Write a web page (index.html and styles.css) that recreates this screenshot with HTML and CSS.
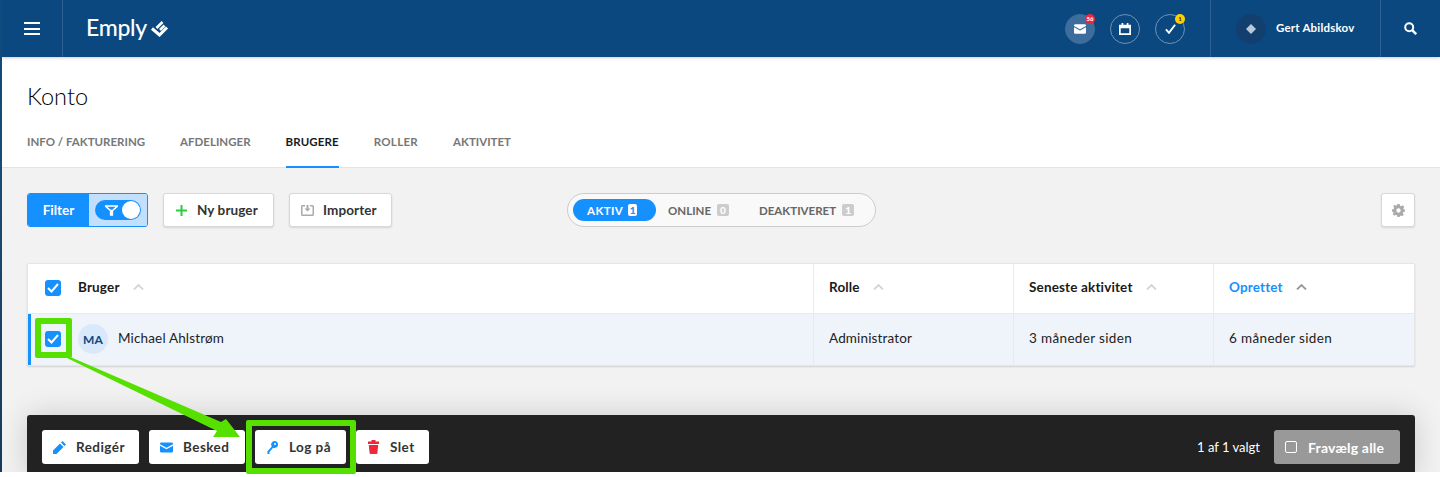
FILE: index.html
```html
<!DOCTYPE html>
<html lang="da">
<head>
<meta charset="utf-8">
<title>Konto</title>
<link rel="stylesheet" href="styles.css">
</head>
<body>
<div class="strip"></div>
<div class="app">
  <header class="topbar">
    <button class="burger" aria-label="Menu"><span></span><span></span><span></span></button>
    <div class="logo"><span class="logo-text">Emply</span><svg width="19" height="17" viewBox="0 0 19 17"><path d="M2 8.500l7.500 6.500L17 7.500" fill="none" stroke="#fff" stroke-width="3"/><path d="M6.500 8l6-6M10 10l4.500-4.500" fill="none" stroke="#fff" stroke-width="2.600"/></svg></div>
    <div class="top-actions">
      <div class="round filled">
        <svg width="12" height="10" viewBox="0 0 14 11"><path d="M1.500 0h11A1.500 1.500 0 0 1 14 1.500v.6L7 5.800 0 2.100v-.6A1.500 1.500 0 0 1 1.500 0zM0 3.600l7 3.700 7-3.700v5.900A1.500 1.500 0 0 1 12.500 11h-11A1.500 1.500 0 0 1 0 9.500z" fill="#fff"/></svg>
        <span class="badge red">56</span>
      </div>
      <div class="round">
        <svg width="12" height="12" viewBox="0 0 14 14"><path d="M3 0h2v2h4V0h2v2h3v12H0V2h3zM2 6v6h10V6z" fill="#fff" fill-rule="evenodd"/></svg>
      </div>
      <div class="round">
        <svg width="11" height="10" viewBox="0 0 14 13"><path d="M1 7l4 4.500L13 1" fill="none" stroke="#fff" stroke-width="2.400"/></svg>
        <span class="badge yellow">1</span>
      </div>
    </div>
    <div class="user">
      <div class="avatar"><svg width="10" height="10" viewBox="0 0 10 10"><path d="M5 0l5 5-5 5-5-5z" fill="#b9c7d6"/></svg></div>
      <span class="user-name">Gert Abildskov</span>
    </div>
    <div class="search">
      <svg width="13" height="13" viewBox="0 0 13 13"><circle cx="5.200" cy="5.200" r="4" fill="none" stroke="#fff" stroke-width="2"/><path d="M8.200 8.200l4 4" stroke="#fff" stroke-width="2.400"/></svg>
    </div>
  </header>

  <section class="page-head">
    <h1 class="title">Konto</h1>
    <nav class="tabs">
      <a class="tab">INFO / FAKTURERING</a>
      <a class="tab">AFDELINGER</a>
      <a class="tab active">BRUGERE</a>
      <a class="tab wide">ROLLER</a>
      <a class="tab">AKTIVITET</a>
    </nav>
  </section>

  <main class="content">
    <div class="toolbar">
      <div class="filter">
        <span class="filter-label">Filter</span>
        <span class="filter-side">
          <span class="toggle">
            <svg width="13" height="11" viewBox="0 0 16 13"><path d="M0 0h16v2L10 7v6H6V7L0 2zM3 2l4 3.500h2L13 2z" fill="#fff" fill-rule="evenodd"/></svg>
            <span class="knob"></span>
          </span>
        </span>
      </div>
      <button class="btn new"><svg width="11" height="11" viewBox="0 0 11 11"><path d="M4.500 0h2v4.500H11v2H6.500V11h-2V6.500H0v-2h4.500z" fill="#2ecc40"/></svg>Ny bruger</button>
      <button class="btn import"><svg width="13" height="11" viewBox="0 0 13 11"><path d="M1.500 0H4v1.500H1.500v8h10v-8H9V0h2.500A1.500 1.500 0 0 1 13 1.500v8a1.500 1.500 0 0 1-1.500 1.500h-10A1.500 1.500 0 0 1 0 9.500v-8A1.500 1.500 0 0 1 1.500 0zM5.500 0h2v3.500h2l-3 3-3-3h2z" fill="#aaa"/></svg>Importer</button>
      <div class="segments">
        <span class="seg on">AKTIV <b class="count">1</b></span>
        <span class="seg online">ONLINE <b class="count">0</b></span>
        <span class="seg off">DEAKTIVERET <b class="count">1</b></span>
      </div>
      <button class="btn gear" aria-label="Indstillinger">
        <svg width="13" height="13" viewBox="0 0 24 24"><path d="M10 0h4l.7 3.300 2.300 1 2.900-1.800 2.800 2.800L21 8l1 2.300L24 10v4l-3 .7-1 2.300 1.800 2.900-2.800 2.800L17 21l-2.300 1-.7 2h-4l-.7-3-2.300-1-2.900 1.800-2.800-2.800L3 17l-1-2.300L0 14v-4l3-.7 1-2.300-1.800-2.900 2.800-2.800L7 3l2.300-1zM12 8a4 4 0 1 0 0 8 4 4 0 0 0 0-8z" fill="#aaa" fill-rule="evenodd"/></svg>
      </button>
    </div>

    <div class="table">
      <div class="cell head first">
        <span class="check"><svg width="12" height="10" viewBox="0 0 12 10"><path d="M1 5l3.500 3.500L11 1" fill="none" stroke="#fff" stroke-width="2"/></svg></span>
        <span class="th">Bruger</span><svg class="caret" width="11" height="6" viewBox="0 0 11 6"><path d="M1 5.500l4.500-4.500 4.500 4.500" fill="none" stroke="#d5d5d5" stroke-width="1.800"/></svg>
      </div>
      <div class="cell head"><span class="th">Rolle</span><svg class="caret" width="11" height="6" viewBox="0 0 11 6"><path d="M1 5.500l4.500-4.500 4.500 4.500" fill="none" stroke="#d5d5d5" stroke-width="1.800"/></svg></div>
      <div class="cell head"><span class="th">Seneste aktivitet</span><svg class="caret" width="11" height="6" viewBox="0 0 11 6"><path d="M1 5.500l4.500-4.500 4.500 4.500" fill="none" stroke="#d5d5d5" stroke-width="1.800"/></svg></div>
      <div class="cell head"><span class="th blue">Oprettet</span><svg class="caret" width="11" height="6" viewBox="0 0 11 6"><path d="M1 5.500l4.500-4.500 4.500 4.500" fill="none" stroke="#999" stroke-width="1.800"/></svg></div>

      <div class="cell row first selected">
        <span class="check"><svg width="12" height="10" viewBox="0 0 12 10"><path d="M1 5l3.500 3.500L11 1" fill="none" stroke="#fff" stroke-width="2"/></svg></span>
        <span class="initials">MA</span>
        <span>Michael Ahlstrøm</span>
      </div>
      <div class="cell row">Administrator</div>
      <div class="cell row date">3 måneder siden</div>
      <div class="cell row date">6 måneder siden</div>
    </div>

    <div class="actionbar">
      <button class="act edit"><svg width="13" height="13" viewBox="0 0 13 13"><path d="M9.500 0L13 3.500l-1.500 1.500L8 1.500zM7 2.500L10.500 6l-7 7H0V9.500z" fill="#1590ff"/></svg>Redigér</button>
      <button class="act message"><svg width="13" height="11" viewBox="0 0 14 11"><path d="M1.500 0h11A1.500 1.500 0 0 1 14 1.500v.6L7 5.800 0 2.100v-.6A1.500 1.500 0 0 1 1.500 0zM0 3.600l7 3.700 7-3.700v5.900A1.500 1.500 0 0 1 12.500 11h-11A1.500 1.500 0 0 1 0 9.500z" fill="#1590ff"/></svg>Besked</button>
      <button class="act login"><svg width="13" height="13" viewBox="0 0 11 13"><path d="M7.500 0a3.500 3.500 0 1 1-1.400 6.700L2.500 11v2H.5v-2.800l4.300-4.700A3.500 3.500 0 0 1 7.500 0zm.5 2a1 1 0 1 0 0 2 1 1 0 0 0 0-2z" fill="#1590ff" fill-rule="evenodd"/></svg>Log på</button>
      <button class="act remove"><svg width="13" height="14" viewBox="0 0 11 14"><path d="M3.500 0h4v1.500H11V4H0V1.500h3.500zM.8 5h9.400l-.8 8a1 1 0 0 1-1 1H2.600a1 1 0 0 1-1-1z" fill="#f0263c"/></svg>Slet</button>
      <span class="selected-count">1 af 1 valgt</span>
      <button class="deselect"><span class="empty-box"></span>Fravælg alle</button>
    </div>
  </main>
</div>

<div class="mark mark-check"></div>
<div class="mark mark-login"></div>
<svg class="arrow" width="190" height="90" viewBox="0 0 190 90"><path d="M1 -1L154 65 159 62 173 80 146 80 150 74 0 1z" fill="#55e000"/></svg>
</body>
</html>
```

FILE: styles.css
```css
* { box-sizing: border-box; }
html, body { margin: 0; height: 477px; overflow: hidden; background: #fff; }
body {
  display: flex;
  align-items: flex-start;
  font-family: "Lato", "Liberation Sans", sans-serif;
  color: #222;
  font-size: 13.500px;
}
button { font: inherit; color: inherit; border: 0; padding: 0; background: none; }
.strip { width: 2px; height: 472px; flex: none; background: linear-gradient(#0f4a80, #1b4a70 40%, #173a5c); }
.app { width: 1438px; height: 472px; display: flex; flex-direction: column; background: #f2f2f2; overflow: hidden; }

.topbar { height: 57px; flex: none; background: #0c4880; display: flex; align-items: stretch; color: #fff; box-shadow: 0 1px 3px rgba(0,0,0,.2); position: relative; z-index: 2; }
.burger { width: 61px; display: flex; flex-direction: column; justify-content: center; gap: 3.500px; padding-left: 22px; border-right: 1px solid #2e6090; }
.burger span { display: block; width: 16px; height: 2px; background: #fff; }
.logo { display: flex; align-items: center; gap: 3px; margin-left: 23px; font-size: 23px; font-weight: 500; letter-spacing: -.3px; }
.logo-text { padding-bottom: 3px; }
.top-actions { margin-left: auto; display: flex; align-items: center; gap: 15px; padding-right: 25px; border-right: 1px solid #2e6090; }
.round { width: 30px; height: 30px; border-radius: 50%; border: 1px solid #6d92b5; display: flex; align-items: center; justify-content: center; position: relative; }
.round.filled { background: #3d6d9c; border-color: #3d6d9c; }
.badge { position: absolute; top: -1px; right: -1px; width: 10px; height: 10px; border-radius: 50%; font-size: 6px; font-weight: 900; display: flex; align-items: center; justify-content: center; }
.badge.red { background: #f0263c; color: #fff; }
.badge.yellow { background: #ffd000; color: #333; }
.user { width: 170px; display: flex; align-items: center; padding-left: 25px; border-right: 1px solid #2e6090; }
.avatar { width: 30px; height: 30px; border-radius: 50%; background: #123f6e; display: flex; align-items: center; justify-content: center; }
.user-name { margin-left: 10px; padding-bottom: 3px; font-size: 11.500px; letter-spacing: .2px; font-weight: 700; white-space: nowrap; }
.search { width: 59px; display: flex; align-items: center; justify-content: center; }

.page-head { height: 111px; flex: none; background: #fff; border-bottom: 1px solid #e3e3e3; padding: 0 25px; display: flex; flex-direction: column; }
.title { margin: 25px 0 0; font-size: 23.500px; line-height: 28px; font-weight: 300; color: #000; }
.tabs { margin-top: auto; display: flex; gap: 35px; }
.tab { height: 53px; padding-top: 20px; margin-bottom: -1px; margin-top: -1px; font-size: 11.500px; line-height: 14px; font-weight: 700; color: #777; border-bottom: 2px solid transparent; }
.tab.active { color: #1a1a1a; border-bottom-color: #1590ff; letter-spacing: .1px; }
.tab.wide { letter-spacing: .3px; }

.content { flex: 1; padding: 25px 25px 0; display: flex; flex-direction: column; min-height: 0; }
.toolbar { display: flex; align-items: stretch; height: 34px; flex: none; }
.filter { width: 121px; display: flex; border: 1px solid #1590ff; border-radius: 3px; overflow: hidden; }
.filter-label { width: 61px; background: #1590ff; color: #fff; font-weight: 700; display: flex; align-items: center; justify-content: center; font-size: 13.500px; }
.filter-side { flex: 1; background: #c2e0fd; display: flex; align-items: center; justify-content: center; }
.toggle { width: 46px; height: 20px; border-radius: 10px; background: #1590ff; display: flex; align-items: center; justify-content: space-between; padding: 0 1px 0 10px; }
.knob { width: 18px; height: 18px; border-radius: 50%; background: #fff; }
.btn { background: #fff; border: 1px solid #d8d8d8; border-radius: 3px; box-shadow: 0 1px 2px rgba(0,0,0,.12); display: flex; align-items: center; font-weight: 700; color: #333; font-size: 13.500px; letter-spacing: .1px; white-space: nowrap; }
.btn.new { width: 111px; margin-left: 15px; padding-left: 12px; gap: 10px; }
.btn.import { width: 103px; margin-left: 15px; padding-left: 11px; gap: 9px; }
.btn.gear { width: 34px; justify-content: center; margin-left: auto; }
.segments { width: 309px; margin-left: 175px; border: 1px solid #ccc; border-radius: 17px; background: #f9f9f9; display: flex; align-items: center; padding-left: 5px; }
.seg { height: 22px; display: flex; align-items: center; gap: 6px; font-size: 11.500px; font-weight: 700; color: #666; white-space: nowrap; }
.seg.on { width: 83px; border-radius: 11px; background: #1590ff; color: #fff; gap: 5px; padding-left: 14px; letter-spacing: .4px; }
.seg.online { margin-left: 12px; }
.seg.off { margin-left: 30px; }
.count { min-width: 12px; height: 12px; border-radius: 2px; background: #ccc; color: #fff; font-size: 10px; line-height: 12px; text-align: center; letter-spacing: 0; }
.seg.on .count { min-width: 9px; background: #fff; color: #1590ff; }

.table { margin-top: 36px; flex: none; display: grid; grid-template-columns: 785px 200px 200px 201px; grid-template-rows: 50px 51px; background: #fff; border: 1px solid #e6e6e6; border-radius: 2px; box-shadow: 0 1px 2px rgba(0,0,0,.14); }
.cell { display: flex; align-items: center; padding: 0 0 3px 15px; border-left: 1px solid #e9e9e9; letter-spacing: .15px; }
.cell.first { border-left: 0; }
.cell.head { border-bottom: 1px solid #e9e9e9; }
.cell.first.head { padding-left: 17px; }
.cell.row { background: #eff4fb; font-size: 13.500px; }
.cell.date { letter-spacing: .35px; }
.cell.selected { border-left: 3px solid #1590ff; padding-left: 14px; }
.th { font-weight: 700; font-size: 13.500px; color: #1a1a1a; }
.th.blue { color: #1590ff; }
.caret { margin-left: 13px; }
.check { width: 16px; height: 16px; border-radius: 3px; background: #1590ff; display: flex; align-items: center; justify-content: center; margin: 2px 17px 0 0; }
.initials { width: 30px; height: 30px; border-radius: 50%; background: #d9e9fb; color: #0c4880; font-weight: 700; font-size: 12px; display: flex; align-items: center; justify-content: center; margin: 2px 10px 0 0; }

.actionbar { margin-top: auto; margin-bottom: -7px; height: 64px; flex: none; background: #222; border-radius: 3px 3px 0 0; box-shadow: 0 0 30px rgba(0,0,0,.16); display: flex; align-items: center; padding: 0 15px; }
.act { height: 34px; background: #fff; border-radius: 3px; display: flex; align-items: center; gap: 10px; padding-left: 11px; margin-right: 10px; font-weight: 700; font-size: 13.500px; letter-spacing: .45px; color: #333; white-space: nowrap; }
.act.edit { width: 97px; }
.act.message { width: 96px; }
.act.login { width: 91px; }
.act.remove { width: 73px; }
.selected-count { margin-left: auto; margin-right: 14px; color: #fff; font-size: 13px; }
.deselect { width: 126px; height: 34px; background: #999; border-radius: 3px; display: flex; align-items: center; gap: 11px; padding-left: 11px; color: #fff; font-weight: 700; font-size: 14px; letter-spacing: .2px; white-space: nowrap; }
.empty-box { width: 12px; height: 12px; border: 1px solid #fff; border-radius: 2px; flex: none; }

.mark { position: absolute; border: 6px solid #55e000; border-radius: 2px; }
.mark-check { left: 35px; top: 318px; width: 37px; height: 40px; }
.mark-login { left: 246px; top: 420px; width: 110px; height: 54px; }
.arrow { position: absolute; left: 67px; top: 357px; overflow: visible; }
```
